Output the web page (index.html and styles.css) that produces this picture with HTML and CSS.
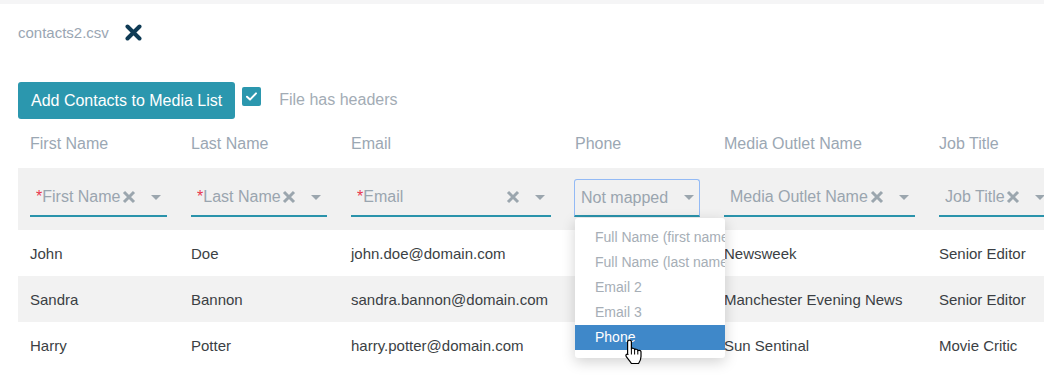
FILE: index.html
```html
<!DOCTYPE html>
<html>
<head>
<meta charset="utf-8">
<link rel="stylesheet" href="styles.css">
</head>
<body>
<div class="page">
  <div class="topstrip"></div>
  <div class="file">
    <span class="fname">contacts2.csv</span>
    <svg class="remove" width="17" height="17" viewBox="0 0 17 17"><path d="M2.5 2.5 L14.5 14.5 M14.5 2.5 L2.5 14.5" stroke="#0f3b55" stroke-width="4" stroke-linecap="round"/></svg>
  </div>
  <div class="actions">
    <button class="btn">Add Contacts to Media List</button>
    <span class="check"><svg width="19" height="19" viewBox="0 0 19 19"><path d="M5 9.8 L8 12.6 L14 6.4" fill="none" stroke="#fff" stroke-width="2" stroke-linecap="round" stroke-linejoin="round"/></svg></span>
    <span class="check-label">File has headers</span>
  </div>

  <div class="table">
    <div class="row head">
      <div>First Name</div><div>Last Name</div><div>Email</div><div>Phone</div><div>Media Outlet Name</div><div>Job Title</div>
    </div>
    <div class="row map">
      <div class="cell"><div class="select"><span class="val"><span class="req">*</span>First Name</span><svg class="clear" width="14" height="14" viewBox="0 0 14 14"><path d="M2 2 L12 12 M12 2 L2 12" stroke="#9ba6ae" stroke-width="3"/></svg><svg class="caret" width="10" height="5" viewBox="0 0 10 5"><path d="M0 0 H10 L5 5 Z" fill="#9ba6ae"/></svg></div></div>
      <div class="cell"><div class="select"><span class="val"><span class="req">*</span>Last Name</span><svg class="clear" width="14" height="14" viewBox="0 0 14 14"><path d="M2 2 L12 12 M12 2 L2 12" stroke="#9ba6ae" stroke-width="3"/></svg><svg class="caret" width="10" height="5" viewBox="0 0 10 5"><path d="M0 0 H10 L5 5 Z" fill="#9ba6ae"/></svg></div></div>
      <div class="cell"><div class="select"><span class="val"><span class="req">*</span>Email</span><svg class="clear" width="14" height="14" viewBox="0 0 14 14"><path d="M2 2 L12 12 M12 2 L2 12" stroke="#9ba6ae" stroke-width="3"/></svg><svg class="caret" width="10" height="5" viewBox="0 0 10 5"><path d="M0 0 H10 L5 5 Z" fill="#9ba6ae"/></svg></div></div>
      <div class="cell menu-host">
        <div class="select focus"><span class="val">Not mapped</span><svg class="caret" width="10" height="5" viewBox="0 0 10 5"><path d="M0 0 H10 L5 5 Z" fill="#9ba6ae"/></svg></div>
        <ul class="menu">
          <li>Full Name (first name first)</li>
          <li>Full Name (last name first)</li>
          <li>Email 2</li>
          <li>Email 3</li>
          <li class="active">Phone</li>
        </ul>
      </div>
      <div class="cell"><div class="select"><span class="val">Media Outlet Name</span><svg class="clear" width="14" height="14" viewBox="0 0 14 14"><path d="M2 2 L12 12 M12 2 L2 12" stroke="#9ba6ae" stroke-width="3"/></svg><svg class="caret" width="10" height="5" viewBox="0 0 10 5"><path d="M0 0 H10 L5 5 Z" fill="#9ba6ae"/></svg></div></div>
      <div class="cell"><div class="select"><span class="val">Job Title</span><svg class="clear" width="14" height="14" viewBox="0 0 14 14"><path d="M2 2 L12 12 M12 2 L2 12" stroke="#9ba6ae" stroke-width="3"/></svg><svg class="caret" width="10" height="5" viewBox="0 0 10 5"><path d="M0 0 H10 L5 5 Z" fill="#9ba6ae"/></svg></div></div>
    </div>
    <div class="row data">
      <div>John</div><div>Doe</div><div>john.doe@domain.com</div><div></div><div>Newsweek</div><div>Senior Editor</div>
    </div>
    <div class="row data alt">
      <div>Sandra</div><div>Bannon</div><div>sandra.bannon@domain.com</div><div></div><div>Manchester Evening News</div><div>Senior Editor</div>
    </div>
    <div class="row data">
      <div>Harry</div><div>Potter</div><div>harry.potter@domain.com</div><div></div><div>Sun Sentinal</div><div>Movie Critic</div>
    </div>
  </div>

  <svg class="cursor" width="20" height="26" viewBox="0 0 20 26">
    <path d="M5.5 1.2 C6.6 1.2 7.4 2 7.4 3.1 V10 C7.6 8.9 10.4 8.9 10.6 10.4 V11 C10.8 9.9 13.6 9.9 13.8 11.4 V12 C14 11 16.8 11 17 12.6 V17.5 C17 20.5 16 22.5 14.6 24.5 H7.4 C6.4 22.6 4.6 20.6 2.4 17.8 C1.2 16.3 2.4 14.4 4 15.4 L3.6 15.2 V3.1 C3.6 2 4.4 1.2 5.5 1.2 Z" fill="#fff" stroke="#000" stroke-width="1.2" stroke-linejoin="round"/>
    <path d="M10.6 11 V15.5 M13.8 12 V15.5 M7.4 10 V15.5" stroke="#000" stroke-width="1"/>
  </svg>
</div>
</body>
</html>
```

FILE: styles.css
```css
html, body {
  margin: 0;
  padding: 0;
  background: #fff;
  overflow: hidden;
}
body {
  font-family: "Liberation Sans", Arial, sans-serif;
  width: 1044px;
  height: 377px;
}
.page {
  position: relative;
  width: 1044px;
  height: 377px;
  overflow: hidden;
}
.topstrip {
  height: 4px;
  background: #f5f5f6;
}
.file {
  display: flex;
  align-items: center;
  height: 20px;
  margin-top: 18px;
  padding-left: 18px;
}
.fname {
  font-size: 15px;
  color: #9aa6b3;
}
.remove {
  margin-left: 16px;
  margin-top: 1px;
}
.actions {
  display: flex;
  align-items: center;
  margin-top: 40px;
  padding-left: 18px;
  height: 37px;
}
.btn {
  height: 37px;
  padding: 0 13px;
  border: none;
  border-radius: 3px;
  background: #2b97ae;
  color: #fff;
  font-family: inherit;
  font-size: 16px;
}
.check {
  align-self: flex-start;
  margin-top: 5px;
  margin-left: 7px;
  width: 19px;
  height: 19px;
  border-radius: 2px;
  background: #2b97ae;
  display: flex;
}
.check-label {
  margin-left: 18px;
  font-size: 16px;
  color: #a3acb5;
  margin-top: -2px;
}
.table {
  margin-left: 18px;
  width: 1100px;
}
.row {
  display: grid;
  grid-template-columns: 161px 160px 224px 149px 215px 136px;
  padding-left: 12px;
  align-items: center;
}
.head {
  height: 49px;
  font-size: 16px;
  color: #9ba7b3;
}
.map {
  height: 62px;
  background: #f1f1f1;
  align-items: start;
  padding-top: 11px;
  box-sizing: border-box;
}
.cell {
  position: relative;
}
.select {
  width: calc(100% - 24px);
  height: 38px;
  box-sizing: border-box;
  display: flex;
  align-items: center;
  padding: 0 6px;
  border-bottom: 2px solid #2a93ab;
  font-size: 16px;
  color: #9aa5af;
}
.val {
  flex: 1;
  white-space: nowrap;
  overflow: hidden;
}
.req {
  color: #e8394e;
}
.clear {
  flex: none;
  margin-right: 15px;
}
.caret {
  flex: none;
  margin-left: auto;
}
.select.focus {
  border: 1.5px solid #93baf5;
  border-bottom: 2px solid #2a93ab;
  border-radius: 3px 3px 0 0;
  padding-left: 6px;
  padding-right: 5px;
  margin-left: -1px;
  width: 126px;
}
.menu {
  position: absolute;
  z-index: 5;
  left: 0;
  top: 39px;
  width: 150px;
  margin: 0;
  padding: 7px 0 8px;
  list-style: none;
  background: #fff;
  border-radius: 3px;
  box-shadow: 0 4px 14px rgba(0, 0, 0, 0.18);
  overflow: hidden;
}
.menu li {
  height: 25px;
  line-height: 25px;
  padding-left: 20px;
  font-size: 14px;
  color: #a6aeb6;
  white-space: nowrap;
  overflow: hidden;
}
.menu li.active {
  background: #3f88c9;
  color: #fff;
}
.data {
  height: 46px;
  font-size: 15px;
  color: #3b3f44;
}
.data.alt {
  background: #f2f2f2;
}
.cursor {
  position: absolute;
  left: 624px;
  top: 339px;
  z-index: 10;
}
```
